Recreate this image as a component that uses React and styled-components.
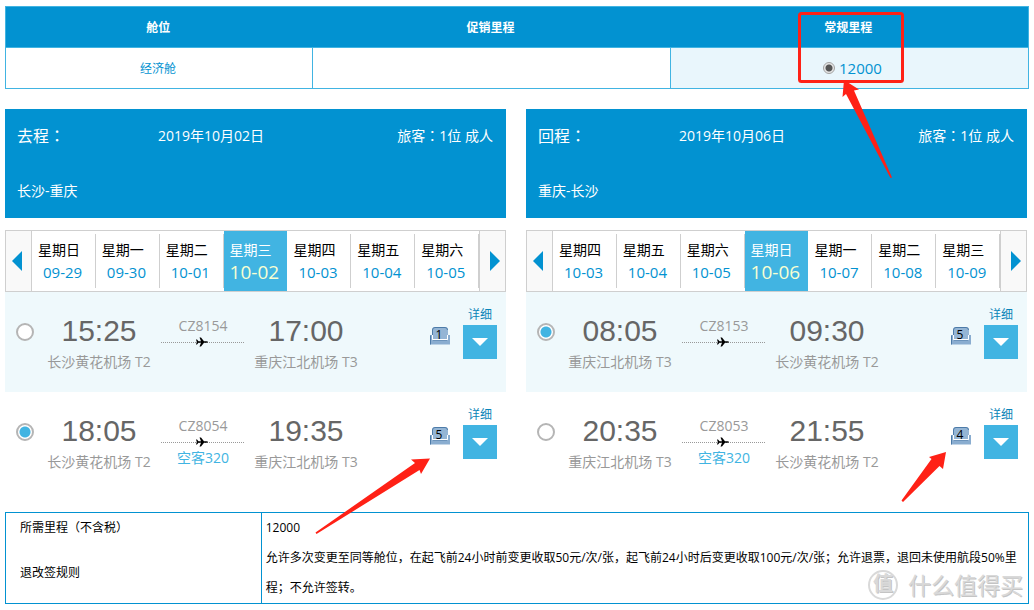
import React, { useState } from 'react';
import styled, { createGlobalStyle } from 'styled-components';

const COLORS = {
  primary: '#0292d1',
  light: '#41b4e2',
  tint: '#eff9fc',
  border: '#cfcfcf',
  muted: '#999999',
  mark: '#ff2116'
};

const GlobalStyle = createGlobalStyle`
  * {
    box-sizing: border-box;
  }

  body {
    margin: 0;
    background: #ffffff;
    color: #000000;
    font-family: 'Open Sans', 'Noto Sans CJK SC', sans-serif;
    font-size: 14px;
    line-height: 20px;
  }

  button, input {
    margin: 0;
    padding: 0;
    font: inherit;
  }
`;

const Page = styled.main`
  position: relative;
  padding: 6px 5px;
`;

const CabinTable = styled.table`
  width: 100%;
  table-layout: fixed;
  border-collapse: collapse;
  border: 1px solid ${COLORS.light};
  font-size: 12px;
  text-align: center;
`;

const CabinHead = styled.th`
  width: ${props => props.$width};
  height: 41px;
  padding: 2px 2px 0 0;
  background: ${COLORS.primary};
  border-bottom: 1px solid ${COLORS.light};
  color: #ffffff;
  font-weight: 700;
`;

const CabinCell = styled.td`
  height: 41px;
  padding: 2px 2px 0 0;
  border: 1px solid ${COLORS.light};
  background: ${props => (props.$selected ? '#e9f6fc' : '#ffffff')};
  color: ${COLORS.primary};
`;

const MilesOption = styled.label`
  display: inline-flex;
  align-items: center;
  gap: 4px;
  padding-left: 8px;
  font-size: 15px;
  line-height: 18px;
`;

const MilesRadio = styled.input`
  appearance: none;
  width: 12px;
  height: 12px;
  border: 1px solid #a3a3a3;
  border-radius: 50%;
  background: #e6e6e6;

  &:checked {
    background: radial-gradient(circle, #555555 3px, #e6e6e6 4px);
  }
`;

const Trips = styled.div`
  display: grid;
  grid-template-columns: 1fr 1fr;
  gap: 20px;
  margin-top: 20px;
  padding-right: 2px;
`;

const Trip = styled.section`
  min-width: 0;
`;

const TripHeader = styled.header`
  padding: 16px 13px 17px 12px;
  background: ${COLORS.primary};
  color: #ffffff;
  font-family: 'Open Sans', 'Noto Sans CJK TC', sans-serif;
`;

const TripSummary = styled.div`
  display: flex;
  align-items: center;
  height: 22px;
`;

const Direction = styled.h2`
  width: 141px;
  margin: 0;
  font-size: 16px;
  font-weight: 400;
`;

const Passengers = styled.span`
  margin-left: auto;
`;

const Route = styled.div`
  margin-top: 34px;
`;

const DateStrip = styled.div`
  display: flex;
  height: 62px;
  margin-top: 12px;
  border: 1px solid ${COLORS.border};
`;

const StripArrow = styled.button`
  display: flex;
  flex: 0 0 26px;
  align-items: center;
  justify-content: center;
  padding-${props => props.$side}: 4px;
  border: 0;
  border-${props => props.$side}: 1px solid ${COLORS.border};
  background: #f9f9f9;
  cursor: pointer;
`;

const Day = styled.button`
  display: flex;
  flex: 1 1 0;
  flex-direction: column;
  justify-content: center;
  padding: 2px 0 0 6px;
  border: 0;
  background: ${props => (props.$active ? COLORS.light : 'linear-gradient(#cfcfcf, #cfcfcf) right center / 1px 54px no-repeat')};
  color: ${props => (props.$active ? '#ffffff' : '#000000')};
  text-align: left;
  cursor: pointer;
`;

const DayDate = styled.span`
  padding-left: ${props => (props.$active ? '0' : '5px')};
  color: ${props => (props.$active ? '#f8ffd2' : COLORS.primary)};
  font-size: ${props => (props.$active ? '19px' : '15px')};
  line-height: 24px;
`;

const FlightRow = styled.div`
  display: grid;
  grid-template-columns: 36px 116px 92px 114px 1fr 34px;
  height: 100px;
  padding-right: 9px;
  background: ${props => (props.$shaded ? COLORS.tint : '#ffffff')};
`;

const FlightRadio = styled.input`
  appearance: none;
  width: 18px;
  height: 18px;
  margin: 31px 0 0 11px;
  border: 2px solid #b5b5b5;
  border-radius: 50%;
  background: #ffffff;

  &:checked {
    background: radial-gradient(circle, ${COLORS.light} 5px, #ffffff 6px);
  }
`;

const Stop = styled.div`
  padding-top: 22px;
  color: ${COLORS.muted};
  text-align: center;
  white-space: nowrap;
`;

const Time = styled.div`
  margin-bottom: 4px;
  color: #666666;
  font-family: 'Liberation Sans', Arial, sans-serif;
  font-size: 30px;
  line-height: 34px;
`;

const Leg = styled.div`
  padding: 24px 4px 0;
  color: ${COLORS.muted};
  text-align: center;
`;

const LegLine = styled.div`
  display: flex;
  align-items: center;
  justify-content: center;
  height: 12px;
  padding-right: 3px;
  background: repeating-linear-gradient(90deg, #999999 0 1px, transparent 1px 2px) center / 100% 1px no-repeat;
`;

const Aircraft = styled.div`
  color: ${COLORS.light};
`;

const Seats = styled.div`
  position: relative;
  justify-self: end;
  width: 20px;
  height: 18px;
  margin: 35px 13px 0 0;
`;

const SeatCount = styled.span`
  position: absolute;
  inset: 0;
  padding-right: 2px;
  color: #000000;
  font-size: 12px;
  line-height: 16px;
  text-align: center;
`;

const Details = styled.div`
  padding-top: 13px;
  color: #0a84b8;
  font-size: 12px;
  text-align: center;
`;

const ExpandButton = styled.button`
  display: flex;
  align-items: center;
  justify-content: center;
  width: 34px;
  height: 34px;
  border: 0;
  background: ${COLORS.light};
  cursor: pointer;
`;

const RulesPanel = styled.div`
  position: relative;
  margin-top: 20px;
`;

const RulesTable = styled.table`
  width: 100%;
  table-layout: fixed;
  border-collapse: collapse;
  border: 1px solid ${COLORS.primary};
  font-size: 12px;
  line-height: 30px;
`;

const RuleLabel = styled.th`
  width: 25%;
  padding: 0 0 0 14px;
  border-right: 1px solid ${COLORS.primary};
  font-weight: 400;
  text-align: left;
`;

const RuleValue = styled.td`
  padding: 0 2px 0 4px;
`;

const Watermark = styled.div`
  position: absolute;
  right: 6px;
  bottom: 4px;
  display: flex;
  align-items: center;
  gap: 10px;
  color: #d9d9d9;
  font-size: 23px;
  line-height: 30px;
  text-shadow: 1px 1px 0 #c4c4c4;
  pointer-events: none;
`;

const WatermarkBadge = styled.span`
  width: 30px;
  height: 30px;
  border: 2px solid #d9d9d9;
  border-radius: 50%;
  font-size: 20px;
  font-weight: 700;
  line-height: 24px;
  text-align: center;
`;

const Marks = styled.svg`
  position: absolute;
  top: 0;
  left: 0;
  pointer-events: none;
`;

const trips = [
  {
    id: 'outbound',
    direction: '去程：',
    date: '2019年10月02日',
    route: '长沙-重庆',
    selected: 'CZ8054',
    days: [
      ['星期日', '09-29'],
      ['星期一', '09-30'],
      ['星期二', '10-01'],
      ['星期三', '10-02'],
      ['星期四', '10-03'],
      ['星期五', '10-04'],
      ['星期六', '10-05']
    ],
    from: '长沙黄花机场 T2',
    to: '重庆江北机场 T3',
    flights: [
      { no: 'CZ8154', depart: '15:25', arrive: '17:00', seats: 1 },
      { no: 'CZ8054', depart: '18:05', arrive: '19:35', seats: 5, aircraft: '空客320' }
    ]
  },
  {
    id: 'return',
    direction: '回程：',
    date: '2019年10月06日',
    route: '重庆-长沙',
    selected: 'CZ8153',
    days: [
      ['星期四', '10-03'],
      ['星期五', '10-04'],
      ['星期六', '10-05'],
      ['星期日', '10-06'],
      ['星期一', '10-07'],
      ['星期二', '10-08'],
      ['星期三', '10-09']
    ],
    from: '重庆江北机场 T3',
    to: '长沙黄花机场 T2',
    flights: [
      { no: 'CZ8153', depart: '08:05', arrive: '09:30', seats: 5 },
      { no: 'CZ8053', depart: '20:35', arrive: '21:55', seats: 4, aircraft: '空客320' }
    ]
  }
];

const PlaneIcon = () => (
  <svg width="12" height="10" viewBox="0 0 12 10" aria-hidden="true">
    <path d="M0 2.500h1L2.500 4.300H5L3.500.5H5l3 3.800h2.500Q12 4.500 12 5t-1.500.7H8L5 9.500H3.500L5 5.700H2.500L1 7.500H0L.8 5z" fill="#000" />
  </svg>
);

const SeatIcon = () => (
  <svg width="20" height="18" viewBox="0 0 20 18" aria-hidden="true">
    <path d="M2 12V3q0-3 3-3h10q3 0 3 3v9z" fill="#94b5d5" />
    <path d="M2.500 8V3q0-2.500 2.500-2.500h10Q17.500.5 17.500 3" fill="none" stroke="#4d7ba8" />
    <path d="M0 8h2.500v5h15V8H20v9.500H0z" fill="#8aadd0" />
    <path d="M.5 17.500v-9" fill="none" stroke="#4d7ba8" />
    <path d="M2.500 8v4.500h15V8" fill="none" stroke="#fff" />
    <path d="M3 13.500h14" stroke="#6b93bb" />
  </svg>
);

const Triangle = ({ direction }) => (
  <svg width="10" height="20" viewBox="0 0 10 20" aria-hidden="true">
    <path d={direction === 'left' ? 'M10 0v20L0 10z' : 'M0 0v20l10-10z'} fill={COLORS.primary} />
  </svg>
);

function Flight({ trip, flight, shaded, checked, onSelect }) {
  return (
    <FlightRow $shaded={shaded}>
      <FlightRadio
        type="radio"
        name={trip.id}
        aria-label={flight.no}
        checked={checked}
        onChange={onSelect}
      />
      <Stop>
        <Time>{flight.depart}</Time>
        {trip.from}
      </Stop>
      <Leg>
        {flight.no}
        <LegLine><PlaneIcon /></LegLine>
        {flight.aircraft && <Aircraft>{flight.aircraft}</Aircraft>}
      </Leg>
      <Stop>
        <Time>{flight.arrive}</Time>
        {trip.to}
      </Stop>
      <Seats>
        <SeatIcon />
        <SeatCount>{flight.seats}</SeatCount>
      </Seats>
      <Details>
        <span id={`details-${flight.no}`}>详细</span>
        <ExpandButton type="button" aria-labelledby={`details-${flight.no}`}>
          <svg width="16" height="8" viewBox="0 0 16 8" aria-hidden="true">
            <path d="M0 0h16L8 8z" fill="#fff" />
          </svg>
        </ExpandButton>
      </Details>
    </FlightRow>
  );
}

function TripPanel({ trip }) {
  const [selected, setSelected] = useState(trip.selected);
  const [day, setDay] = useState(3);

  return (
    <Trip>
      <TripHeader>
        <TripSummary>
          <Direction>{trip.direction}</Direction>
          <span>{trip.date}</span>
          <Passengers>旅客：1位 成人</Passengers>
        </TripSummary>
        <Route>{trip.route}</Route>
      </TripHeader>

      <DateStrip>
        <StripArrow type="button" $side="right" aria-label="前一天">
          <Triangle direction="left" />
        </StripArrow>
        {trip.days.map(([weekday, date], index) => (
          <Day key={date} type="button" $active={index === day} onClick={() => setDay(index)}>
            <span>{weekday}</span>
            <DayDate $active={index === day}>{date}</DayDate>
          </Day>
        ))}
        <StripArrow type="button" $side="left" aria-label="后一天">
          <Triangle direction="right" />
        </StripArrow>
      </DateStrip>

      {trip.flights.map((flight, index) => (
        <Flight
          key={flight.no}
          trip={trip}
          flight={flight}
          shaded={index % 2 === 0}
          checked={selected === flight.no}
          onSelect={() => setSelected(flight.no)}
        />
      ))}
    </Trip>
  );
}

function App() {
  return (
    <Page>
      <GlobalStyle />

      <CabinTable>
        <thead>
          <tr>
            <CabinHead $width="30%">舱位</CabinHead>
            <CabinHead $width="35%">促销里程</CabinHead>
            <CabinHead $width="35%">常规里程</CabinHead>
          </tr>
        </thead>
        <tbody>
          <tr>
            <CabinCell>经济舱</CabinCell>
            <CabinCell />
            <CabinCell $selected>
              <MilesOption>
                <MilesRadio type="radio" name="miles" defaultChecked />
                12000
              </MilesOption>
            </CabinCell>
          </tr>
        </tbody>
      </CabinTable>

      <Trips>
        {trips.map(trip => (
          <TripPanel key={trip.id} trip={trip} />
        ))}
      </Trips>

      <RulesPanel>
        <RulesTable>
          <tbody>
            <tr>
              <RuleLabel scope="row">所需里程（不含税）</RuleLabel>
              <RuleValue>12000</RuleValue>
            </tr>
            <tr>
              <RuleLabel scope="row">退改签规则</RuleLabel>
              <RuleValue>
                允许多次变更至同等舱位，在起飞前24小时前变更收取50元/次/张，起飞前24小时后变更收取100元/次/张；允许退票，退回未使用航段50%里程；不允许签转。
              </RuleValue>
            </tr>
          </tbody>
        </RulesTable>
        <Watermark>
          <WatermarkBadge>值</WatermarkBadge>
          什么值得买
        </Watermark>
      </RulesPanel>

      <Marks width="1034" height="610" viewBox="0 0 1034 610" fill={COLORS.mark} aria-hidden="true">
        <rect x="799.5" y="13.5" width="103" height="68" rx="2" fill="none" stroke={COLORS.mark} strokeWidth="3" />
        <path d="M844 80L859 89.500L854 90.500L892 177.500L890.500 178L846 94L842.500 97z" />
        <path d="M430 458.500L421 474L419.500 470L316.500 534L315.500 532.500L415 463L411 459.500z" />
        <path d="M946 452L943 469L939.500 466L903 502L901.500 500.500L931.500 459L929 457z" />
      </Marks>
    </Page>
  );
}

export default App;
